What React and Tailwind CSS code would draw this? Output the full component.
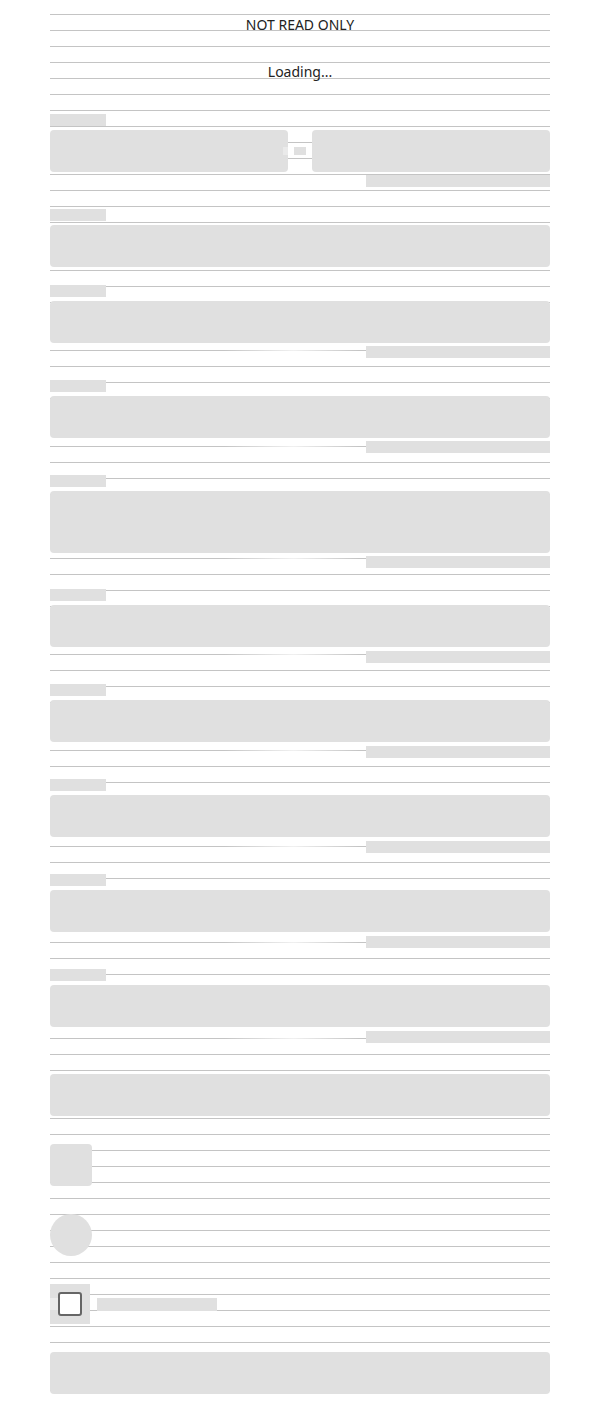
import React from "react";

const ruled =
  "bg-[repeating-linear-gradient(to_bottom,transparent_0px,transparent_14px,#c4c4c4_14px,#c4c4c4_15px,transparent_15px,transparent_16px)]";

function Helper({ gap = "mt-[3px]" }) {
  return (
    <div className={`${gap} flex h-3`}>
      <div className="flex-1 bg-[linear-gradient(90deg,transparent_55%,rgba(255,255,255,0.75)_77%,transparent_98%)]" />
      <div className="h-3 w-[184px] bg-[#e0e0e0]" />
    </div>
  );
}

function Field({ tall, helper = true, loose, className = "" }) {
  return (
    <div className={className}>
      <div className="h-3 w-14 bg-[#e0e0e0]" />
      <div className={tall ? "mt-1 h-[62px] rounded bg-[#e0e0e0]" : "mt-1 h-[42px] rounded bg-[#e0e0e0]"} />
      {helper && <Helper gap={loose ? "mt-1" : "mt-[3px]"} />}
    </div>
  );
}

export default function App() {
  return (
    <div className="min-h-screen bg-white font-['Noto_Sans',sans-serif] text-[14px] text-[#222]">
      <div className={`mx-auto flex w-[500px] flex-col pt-4 ${ruled}`}>
        <div className="h-4 pt-px text-center leading-4">NOT READ ONLY</div>
        <div className="mt-8 h-4 text-center leading-4">Loading...</div>

        {/* range field */}
        <div className="mt-[34px]">
          <div className="h-3 w-14 bg-[#e0e0e0]" />
          <div className="mt-1 flex h-[42px] items-center">
            <div className="flex h-full flex-1 items-center justify-end rounded bg-[#e0e0e0]">
              <div className="h-2 w-[5px] bg-[#eaeaea]" />
            </div>
            <div className="flex w-6 justify-center">
              <div className="h-2 w-3 bg-[#e0e0e0]" />
            </div>
            <div className="h-full flex-1 rounded bg-[#e0e0e0]" />
          </div>
          <Helper />
        </div>

        <Field helper={false} className="mt-[22px]" />
        <Field className="mt-[18px]" />
        <Field className="mt-[22px]" />
        <Field tall className="mt-[22px]" />
        <Field loose className="mt-[21px]" />
        <Field loose className="mt-[21px]" />
        <Field loose className="mt-[21px]" />
        <Field loose className="mt-[21px]" />
        <Field loose className="mt-[21px]" />

        <div className="mt-[31px] h-[42px] rounded bg-[#e0e0e0]" />
        <div className="mt-7 h-[42px] w-[42px] rounded bg-[#e0e0e0]" />
        <div className="mt-7 h-[42px] w-[42px] rounded-full bg-[#e0e0e0]" />

        <div className="mt-7 flex items-center gap-[7px]">
          <div className="flex h-10 w-10 items-center bg-[#e0e0e0]">
            <div className="h-3 w-2 bg-[#ececec]" />
            <div className="h-6 w-6 rounded-[3px] border-2 border-[#666] bg-white" />
          </div>
          <div className="h-[13px] w-[120px] bg-[#e0e0e0]" />
        </div>

        <div className="mt-7 h-[42px] rounded bg-[#e0e0e0]" />
      </div>
    </div>
  );
}
